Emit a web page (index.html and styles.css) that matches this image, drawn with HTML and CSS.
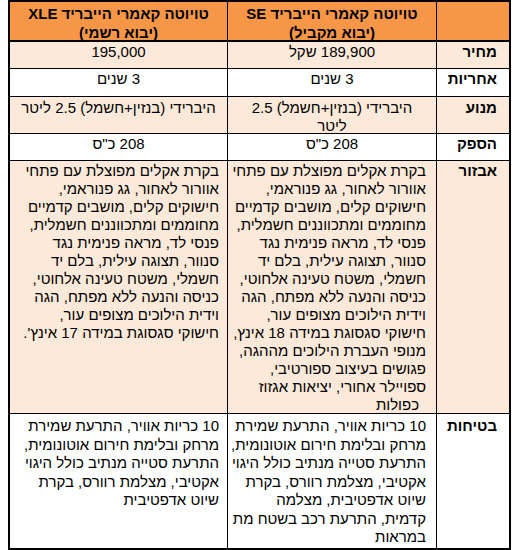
FILE: index.html
```html
<!DOCTYPE html>
<html lang="he">
<head>
<meta charset="utf-8">
<title>טויוטה קאמרי הייבריד - השוואה</title>
<link rel="stylesheet" href="styles.css">
</head>
<body>
<div class="cmp" dir="rtl">
  <div class="cell head"></div>
  <div class="cell head">טויוטה קאמרי הייבריד SE<br>(יבוא מקביל)</div>
  <div class="cell head">טויוטה קאמרי הייבריד XLE<br>(יבוא רשמי)</div>

  <div class="cell label tint">מחיר</div>
  <div class="cell val tint">189,900 שקל</div>
  <div class="cell val tint">195,000</div>

  <div class="cell label">אחריות</div>
  <div class="cell val">3 שנים</div>
  <div class="cell val">3 שנים</div>

  <div class="cell label tint eng">מנוע</div>
  <div class="cell val tint eng">היברידי (בנזין+חשמל) 2.5<br>ליטר</div>
  <div class="cell val tint eng">היברידי (בנזין+חשמל) 2.5 ליטר</div>

  <div class="cell label hp">הספק</div>
  <div class="cell val hp">208 כ"ס</div>
  <div class="cell val hp">208 כ"ס</div>

  <div class="cell label tint">אבזור</div>
  <div class="cell text tint se">בקרת אקלים מפוצלת עם פתחי<br>אוורור לאחור, גג פנוראמי,<br>חישוקים קלים, מושבים קדמיים<br>מחוממים ומתכווננים חשמלית,<br>פנסי לד, מראה פנימית נגד<br>סנוור, תצוגה עילית, בלם יד<br>חשמלי, משטח טעינה אלחוטי,<br>כניסה והנעה ללא מפתח, הגה<br>וידית הילוכים מצופים עור,<br>חישוקי סגסוגת במידה 18 אינץ,<br>מנופי העברת הילוכים מההגה,<br>פגושים בעיצוב ספורטיבי,<br>ספויילר אחורי, יציאות אגזוז<br><span class="last">כפולות</span></div>
  <div class="cell text tint">בקרת אקלים מפוצלת עם פתחי<br>אוורור לאחור, גג פנוראמי,<br>חישוקים קלים, מושבים קדמיים<br>מחוממים ומתכווננים חשמלית,<br>פנסי לד, מראה פנימית נגד<br>סנוור, תצוגה עילית, בלם יד<br>חשמלי, משטח טעינה אלחוטי,<br>כניסה והנעה ללא מפתח, הגה<br>וידית הילוכים מצופים עור,<br>חישוקי סגסוגת במידה 17 אינץ'.</div>

  <div class="cell label safe">בטיחות</div>
  <div class="cell text safe se">10 כריות אוויר, התרעת שמירת<br>מרחק ובלימת חירום אוטונומית,<br>התרעת סטייה מנתיב כולל היגוי<br>אקטיבי, מצלמת רוורס, בקרת<br>שיוט אדפטיבית, מצלמה<br>קדמית, התרעת רכב בשטח מת<br>במראות</div>
  <div class="cell text safe">10 כריות אוויר, התרעת שמירת<br>מרחק ובלימת חירום אוטונומית,<br>התרעת סטייה מנתיב כולל היגוי<br>אקטיבי, מצלמת רוורס, בקרת<br>שיוט אדפטיבית</div>
</div>
</body>
</html>
```

FILE: styles.css
```css
html, body {
  margin: 0;
  padding: 0;
  background: #ffffff;
}

body {
  font-family: "Liberation Sans", Arial, sans-serif;
  font-size: 15px;
  color: #000000;
}

.cmp {
  display: grid;
  direction: rtl;
  grid-template-columns: 72px 208px 217px;
  grid-template-rows: 39px 26px 27px 36px 26px 252px 134px;
  gap: 1px;
  padding: 2px;
  background: #000000;
  width: max-content;
  margin-left: 8px;
}

.cell {
  background: #ffffff;
  line-height: 18px;
  padding-top: 1px;
  white-space: nowrap;
  overflow: hidden;
}

.tint {
  background: #fde9d9;
}

.head {
  background: #f79646;
  font-weight: bold;
  text-align: center;
  line-height: 19px;
  padding-top: 2px;
  margin-bottom: 1px;
}

.label {
  font-weight: bold;
  text-align: right;
  padding-right: 12px;
}

.val {
  text-align: center;
}

.eng {
  padding-top: 2px;
}

.text {
  text-align: right;
  padding-right: 8px;
}

.text.se {
  padding-right: 10px;
}

.safe {
  line-height: 18.5px;
  padding-top: 3px;
}

.last {
  padding-right: 7px;
}
```
